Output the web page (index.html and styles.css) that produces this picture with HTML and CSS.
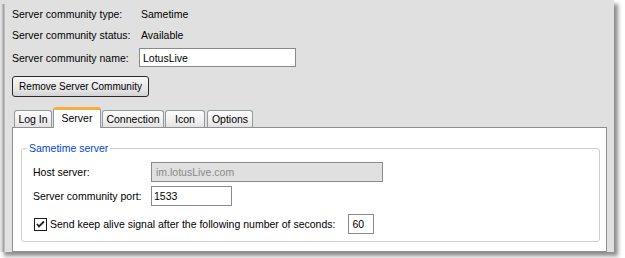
FILE: index.html
```html
<!DOCTYPE html>
<html>
<head>
<meta charset="utf-8">
<link rel="stylesheet" href="styles.css">
</head>
<body>
<div class="frame">
  <div class="info">
    <div class="row r1"><span class="lbl">Server community type:</span><span class="val">Sametime</span></div>
    <div class="row r2"><span class="lbl">Server community status:</span><span class="val">Available</span></div>
    <div class="row r3"><span class="lbl">Server community name:</span><span class="input name">LotusLive</span></div>
  </div>
  <div class="btn">Remove Server Community</div>
  <div class="tabs">
    <div class="tab t-login">Log In</div>
    <div class="tab t-server sel">Server</div>
    <div class="tab t-conn">Connection</div>
    <div class="tab t-icon">Icon</div>
    <div class="tab t-opt">Options</div>
  </div>
  <div class="panel">
    <fieldset class="group">
      <legend>Sametime server</legend>
      <div class="grow g1"><span class="glbl">Host server:</span><span class="input host disabled">im.lotusLive.com</span></div>
      <div class="grow g2"><span class="glbl">Server community port:</span><span class="input port">1533</span></div>
      <div class="grow g3">
        <span class="check"><svg width="13" height="13" viewBox="0 0 13 13"><rect x="0.5" y="0.5" width="12" height="12" fill="#fff" stroke="#1c1c1c"/><polyline points="3,6 5,8.5 10,3.5" fill="none" stroke="#222" stroke-width="1.8"/></svg></span>
        <span class="ctext">Send keep alive signal after the following number of seconds:</span>
        <span class="input secs">60</span>
      </div>
    </fieldset>
  </div>
</div>
</body>
</html>
```
FILE: styles.css
```css
html, body {
  margin: 0;
  padding: 0;
  background: #ffffff;
}
body {
  width: 625px;
  height: 258px;
  overflow: hidden;
  font-family: "Liberation Sans", Arial, sans-serif;
  font-size: 10.5px;
  color: #000;
}
.frame {
  box-sizing: border-box;
  width: 614px;
  height: 252px;
  padding: 4px 7px 0 12px;
  background-color: #e0e0e0;
  background-image: linear-gradient(to right, #e8e8e8 0, #d4d4d4 2px, #a8a8a8 3px, #9c9c9c 4px, #e0e0e0 5px);
  background-size: 6px 100%;
  background-position: 0 4px;
  background-repeat: no-repeat;
  box-shadow: 4px 4px 4px rgba(0,0,0,0.45);
}
.info {
  display: flex;
  flex-direction: column;
}
.row {
  display: flex;
  align-items: center;
}
.r1 { height: 20px; }
.r2 { height: 21px; }
.r3 { height: 19px; margin-top: 3px; }
.lbl {
  width: 127px;
}
.val {
  padding-left: 2px;
}
.input {
  box-sizing: border-box;
  display: flex;
  align-items: center;
  height: 19px;
  background: #fff;
  border: 1px solid #8a8a8a;
  padding-left: 2px;
}
.name { width: 157px; padding-left: 3px; }
.btn {
  box-sizing: border-box;
  width: 137px;
  height: 21px;
  margin-top: 9px;
  border: 1px solid #2a2a2a;
  border-radius: 3px;
  background: linear-gradient(#f6f6f6, #e4e4e4 70%, #d2d2d2);
  display: flex;
  align-items: center;
  justify-content: center;
  white-space: nowrap;
  font-size: 10px;
}
.tabs {
  display: flex;
  align-items: flex-end;
  height: 20px;
  margin-top: 10px;
  padding-left: 2px;
}
.tab {
  box-sizing: border-box;
  height: 17px;
  border: 1px solid #919b9c;
  border-bottom: none;
  border-radius: 3px 3px 0 0;
  background: linear-gradient(#fcfcfc, #f0f0f0 60%, #e2e2e2);
  display: flex;
  align-items: center;
  justify-content: center;
}
.t-login { width: 38px; }
.t-server { width: 48px; margin-left: 1px; }
.t-conn { width: 62px; margin-left: 1px; }
.t-icon { width: 40px; margin-left: 1px; }
.t-opt { width: 46px; margin-left: 2px; }
.tab.sel {
  height: 21px;
  margin-bottom: -1px;
  position: relative;
  z-index: 1;
  background: #fff;
  border-top: 3px solid #f5b040;
  padding-bottom: 3px;
}
.panel {
  box-sizing: border-box;
  width: 595px;
  height: 125px;
  background: #fff;
  border: 1px solid #8f8f8f;
  padding: 14px 6px 0 8px;
}
.group {
  margin: 0;
  padding: 7px 11px 7px 11px;
  border: 1px solid #d0d0c8;
  border-radius: 3px;
  min-width: 0;
}
.group legend {
  color: #0046d5;
  padding: 0 2px;
  margin-left: -6px;
  line-height: 13px;
}
.grow {
  display: flex;
  align-items: center;
  height: 20px;
}
.g2 { margin-top: 4px; }
.g3 { margin-top: 8px; }
.glbl { width: 118px; }
.grow .input { height: 20px; }
.host {
  width: 232px;
  background: #e0e0e0;
  color: #8a8a8a;
  padding-left: 4px;
}
.port { width: 81px; }
.check {
  display: flex;
  width: 13px;
  height: 13px;
  margin-left: 1px;
}
.ctext { margin-left: 3px; }
.secs { width: 26px; margin-left: 13px; padding-left: 3px; }
```
